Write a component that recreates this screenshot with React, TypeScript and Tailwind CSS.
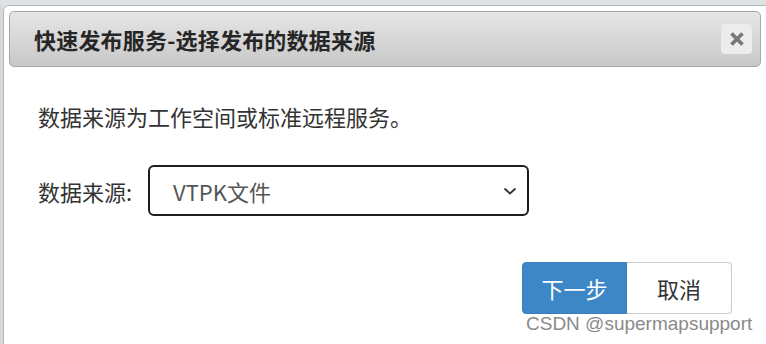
import React from "react";

export default function App() {
  const cjk = { fontFamily: '"Microsoft YaHei", "Noto Sans CJK SC", "Liberation Sans", sans-serif' };
  return (
    <div className="w-[766px] h-[344px] overflow-hidden bg-[#dfe2e5] relative" style={cjk}>
      <div className="absolute left-0 top-[5px] w-[3px] h-[339px] bg-[#d6d9dc]" />
      <div className="ml-[3px] mt-[5px] w-[770px] h-[345px] bg-white border border-[#b5b5b5] rounded-[6px] p-[5px]">
        <div className="w-[752px] h-[56px] rounded-[5px] border border-[#a8a8a8] bg-gradient-to-b from-[#e6e6e6] to-[#c8c8c8] flex items-center pl-[24px] pr-[8px]">
          <div className="flex-1 text-[22px] font-bold text-[#262626] leading-none tracking-[0.2px]">快速发布服务-选择发布的数据来源</div>
          <div className="w-[31px] h-[30px] rounded-[4px] bg-[#ececec] flex items-center justify-center">
            <svg width="16" height="14" viewBox="0 0 16 14">
              <path d="M2.5 1.5 L13.5 12.5 M13.5 1.5 L2.5 12.5" stroke="#787878" strokeWidth="3.8" strokeLinecap="butt" />
            </svg>
          </div>
        </div>
        <div className="pl-[29px] pt-[36px] text-[22px] text-[#333] leading-[26px]">数据来源为工作空间或标准远程服务。</div>
        <div className="pl-[29px] mt-[36px] flex items-center">
          <div className="text-[22px] text-[#333] w-[110px] leading-[26px]">数据来源:</div>
          <div className="w-[381px] h-[51px] border-2 border-[#1e1e1e] rounded-[6px] flex items-center pl-[23px] pr-[10px]">
            <div className="flex-1 text-[22px] text-[#555] leading-none">VTPK文件</div>
            <svg width="14" height="10" viewBox="0 0 14 10">
              <path d="M1.5 2.5 L7 7.5 L12.5 2.5" stroke="#333" strokeWidth="1.8" fill="none" />
            </svg>
          </div>
        </div>
        <div className="flex justify-end mt-[46px] pr-[29px] w-[752px]">
          <div className="w-[105px] h-[52px] rounded-l-[4px] bg-[#3d87c7] text-white text-[22px] flex items-center justify-center border border-[#3a7fbd]">下一步</div>
          <div className="w-[105px] h-[52px] rounded-r-[4px] bg-white text-[#333] text-[22px] flex items-center justify-center border border-[#cccccc] border-l-0">取消</div>
        </div>
      </div>
      <div className="absolute left-[526px] top-[313px] text-[19px] text-[#8a8a8a] leading-[22px]" style={{ fontFamily: '"Liberation Sans", Arial, sans-serif' }}>CSDN @supermapsupport</div>
    </div>
  );
}
